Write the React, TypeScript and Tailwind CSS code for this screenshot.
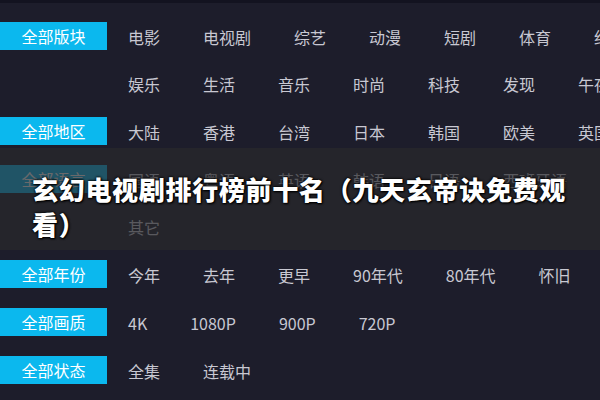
const groups = [
  {
    label: '全部版块',
    lines: [
      ['电影', '电视剧', '综艺', '动漫', '短剧', '体育', '纪录片'],
      ['娱乐', '生活', '音乐', '时尚', '科技', '发现', '午夜'],
    ],
  },
  { label: '全部地区', lines: [['大陆', '香港', '台湾', '日本', '韩国', '欧美', '英国']] },
  {
    label: '全部语言',
    lines: [
      ['国语', '粤语', '英语', '韩语', '日语', '西班牙语'],
      ['其它'],
    ],
  },
  { label: '全部年份', lines: [['今年', '去年', '更早', '90年代', '80年代', '怀旧']] },
  { label: '全部画质', lines: [['4K', '1080P', '900P', '720P']] },
  { label: '全部状态', lines: [['全集', '连载中']] },
]

export default function App() {
  return (
    <div
      className="relative w-[600px] h-[400px] overflow-hidden bg-[#1d1d2b]"
      style={{ fontFamily: '"Noto Sans CJK SC", "Noto Sans", sans-serif' }}
    >
      <div className="h-[3px] bg-[#131320]" />
      <div className="pt-[10px] flex flex-col gap-[1px]">
        {groups.map(g => (
          <div key={g.label} className="flex">
            <div className="mt-[9px] w-[107px] h-[28px] shrink-0 bg-[#0bb8ee] text-white text-[16px] flex items-center justify-center">
              {g.label}
            </div>
            <div className="ml-[21px]">
              {g.lines.map((line, i) => (
                <div key={i} className="h-[47px] flex items-center gap-[43px] whitespace-nowrap text-[16px] text-[#c8c8d2]">
                  {line.map(item => (
                    <span key={item}>{item}</span>
                  ))}
                </div>
              ))}
            </div>
          </div>
        ))}
      </div>

      <div className="absolute left-0 top-[148px] w-[600px] h-[102px] bg-[rgba(42,42,44,0.7)] pl-[32px] pt-[23px]">
        <h1 className="w-[545px] text-[26px] leading-[35px] font-black tracking-[0.7px] text-white [text-shadow:0_0_3px_#000,0_0_2px_#000,1px_1px_2px_#000]">
          玄幻电视剧排行榜前十名（九天玄帝诀免费观看）
        </h1>
      </div>
    </div>
  )
}
